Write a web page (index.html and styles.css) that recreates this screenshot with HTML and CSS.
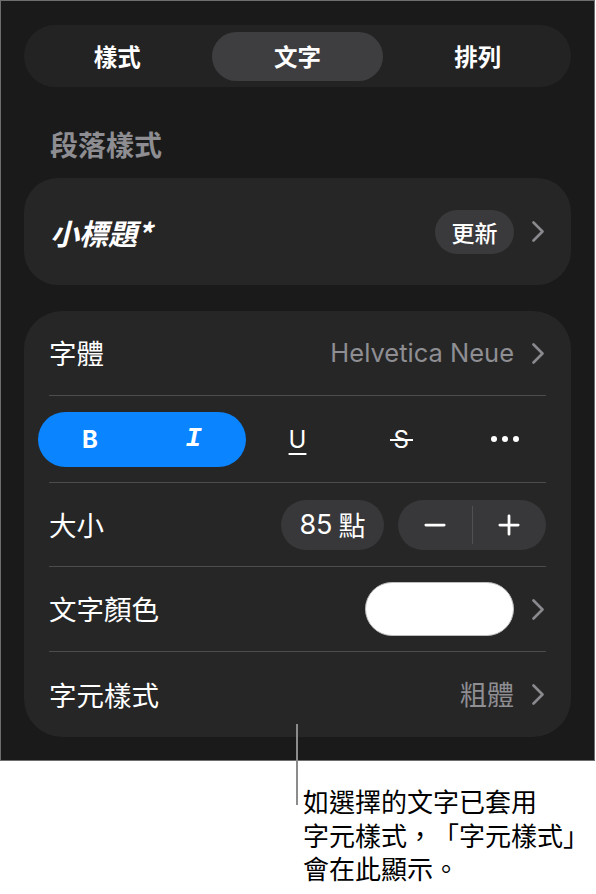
FILE: index.html
```html
<!DOCTYPE html>
<html lang="zh-Hant">
<head>
<meta charset="utf-8">
<link rel="stylesheet" href="styles.css">
</head>
<body>
<div class="page">
  <div class="screen">
    <div class="seg">
      <div class="seg-item">樣式</div>
      <div class="seg-item active">文字</div>
      <div class="seg-item">排列</div>
    </div>
    <div class="section-title">段落樣式</div>
    <div class="card card-style">
      <span class="style-name">小標題*</span>
      <span class="badge">更新</span>
      <svg class="chev" viewBox="0 0 14 23"><path d="M1.5 2.5 L10.5 11.5 L1.5 20.5"/></svg>
    </div>
    <div class="card card-main">
      <div class="row row-1">
        <span class="label">字體</span>
        <span class="value value-latin">Helvetica Neue</span>
        <svg class="chev" viewBox="0 0 14 23"><path d="M1.5 2.5 L10.5 11.5 L1.5 20.5"/></svg>
      </div>
      <div class="row row-format">
        <div class="bi-pill">
          <span class="fmt fmt-b">B</span>
          <span class="fmt fmt-i">I</span>
        </div>
        <span class="fmt fmt-u">U</span>
        <span class="fmt fmt-s">S</span>
        <span class="fmt dots"><i></i><i></i><i></i></span>
      </div>
      <div class="row">
        <span class="label">大小</span>
        <span class="pt-pill"><span class="num">85</span>&nbsp;點</span>
        <div class="stepper">
          <span class="step-btn">
            <svg viewBox="0 0 24 24" class="step-icon"><path d="M2 12 H22"/></svg>
          </span>
          <span class="step-div"></span>
          <span class="step-btn">
            <svg viewBox="0 0 24 24" class="step-icon"><path d="M2 12 H22 M12 2 V22"/></svg>
          </span>
        </div>
      </div>
      <div class="row">
        <span class="label">文字顏色</span>
        <span class="swatch"></span>
        <svg class="chev" viewBox="0 0 14 23"><path d="M1.5 2.5 L10.5 11.5 L1.5 20.5"/></svg>
      </div>
      <div class="row row-last">
        <span class="label">字元樣式</span>
        <span class="value">粗體</span>
        <svg class="chev" viewBox="0 0 14 23"><path d="M1.5 2.5 L10.5 11.5 L1.5 20.5"/></svg>
      </div>
    </div>
  </div>
  <div class="leader"></div>
  <p class="note">如選擇的文字已套用<br>字元樣式，「字元樣式」<br>會在此顯示。</p>
</div>
</body>
</html>
```

FILE: styles.css
```css
html, body {
  margin: 0;
  padding: 0;
  background: #ffffff;
}

body {
  font-family: Inter, "Noto Sans CJK TC", sans-serif;
}

.page {
  position: relative;
  width: 596px;
  height: 894px;
  overflow: hidden;
}

.screen {
  box-sizing: border-box;
  width: 595px;
  height: 761px;
  border: 1px solid #6e6e6e;
  background: #1a1a1a;
  padding: 24px 23px 0 23px;
  display: flex;
  flex-direction: column;
}

/* segmented control */
.seg {
  box-sizing: border-box;
  height: 62px;
  border-radius: 31px;
  background: #232323;
  padding: 7px 8px 6px 8px;
  display: grid;
  grid-template-columns: repeat(3, 1fr);
  column-gap: 10px;
}

.seg-item {
  display: flex;
  align-items: center;
  justify-content: center;
  border-radius: 25px;
  color: #ffffff;
  font-family: "Noto Sans CJK TC", sans-serif;
  font-size: 23.5px;
  font-weight: 600;
  padding-bottom: 2px;
}

.seg-item.active {
  background: #3e3e40;
}

.section-title {
  margin: 40px 0 0 26px;
  font-family: "Noto Sans CJK TC", sans-serif;
  font-size: 28px;
  line-height: 34px;
  font-weight: 600;
  color: #8d8d92;
}

.card {
  background: #262626;
}

.card-style {
  box-sizing: border-box;
  margin-top: 17px;
  height: 107px;
  border-radius: 34px;
  display: flex;
  align-items: center;
  padding: 0 25px 0 26px;
}

.style-name {
  font-family: "Noto Sans CJK TC", sans-serif;
  font-size: 29px;
  font-style: italic;
  font-weight: 600;
  color: #ffffff;
}

.badge {
  margin-left: auto;
  width: 79px;
  height: 44px;
  border-radius: 22px;
  background: #3a3a3c;
  display: flex;
  align-items: center;
  justify-content: center;
  color: #ffffff;
  font-family: "Noto Sans CJK TC", sans-serif;
  font-size: 23px;
  font-weight: 500;
}

.chev {
  width: 14px;
  height: 23px;
  margin-left: 18px;
  flex: none;
}

.chev path {
  fill: none;
  stroke: #8a8a8e;
  stroke-width: 2.6;
  stroke-linecap: round;
  stroke-linejoin: round;
}

.card-main {
  margin-top: 26px;
  border-radius: 38px;
  padding: 0 25px;
}

.row {
  box-sizing: border-box;
  height: 85px;
  display: flex;
  align-items: center;
  border-bottom: 1px solid #4c4c4e;
}

.row-format {
  height: 86px;
  display: grid;
  grid-template-columns: repeat(5, 1fr);
  align-items: center;
  margin: 0 -11px;
  padding: 0;
  border-bottom: none;
}

.row-format + .row {
  border-top: 1px solid #4c4c4e;
}

.row-last {
  border-bottom: none;
}

.label {
  color: #ffffff;
  font-family: "Noto Sans CJK TC", sans-serif;
  font-size: 27.5px;
  margin-top: -2px;
}

.value {
  margin-left: auto;
  color: #8e8e93;
  font-family: "Noto Sans CJK TC", sans-serif;
  font-size: 27px;
  margin-top: -2px;
}

.value-latin {
  font-family: Inter, sans-serif;
  font-size: 25.5px;
}

/* format buttons */
.bi-pill {
  grid-column: 1 / span 2;
  height: 55px;
  border-radius: 28px;
  background: #0a84ff;
  display: grid;
  grid-template-columns: 1fr 1fr;
  align-items: center;
}

.fmt {
  justify-self: center;
  color: #ffffff;
  text-align: center;
}

.fmt-b {
  font-family: Inter, sans-serif;
  font-weight: 700;
  font-size: 24px;
}

.fmt-i {
  font-family: "Liberation Mono", monospace;
  font-style: italic;
  font-weight: 700;
  font-size: 27px;
}

.fmt-u {
  font-family: Inter, sans-serif;
  font-size: 24px;
  text-decoration: underline;
  text-decoration-thickness: 2px;
  text-underline-offset: 5px;
}

.fmt-s {
  position: relative;
  font-family: Inter, sans-serif;
  font-size: 24px;
}

.fmt-s::after {
  content: "";
  position: absolute;
  left: -4px;
  right: -4px;
  top: 50%;
  height: 2px;
  background: #ffffff;
}

.dots {
  display: flex;
  gap: 5px;
}

.dots i {
  width: 6px;
  height: 6px;
  border-radius: 50%;
  background: #ffffff;
}

/* size row */
.pt-pill {
  margin-left: auto;
  width: 103px;
  height: 50px;
  border-radius: 25px;
  background: #38383a;
  display: flex;
  align-items: center;
  justify-content: center;
  color: #ffffff;
  font-family: "Noto Sans CJK TC", sans-serif;
  font-size: 27px;
}

.num {
  font-family: Inter, sans-serif;
}

.stepper {
  margin-left: 14px;
  width: 148px;
  height: 50px;
  border-radius: 25px;
  background: #38383a;
  display: flex;
  align-items: center;
}

.step-btn {
  flex: 1;
  display: flex;
  align-items: center;
  justify-content: center;
}

.step-div {
  width: 1px;
  height: 38px;
  background: #505052;
}

.step-icon {
  width: 22px;
  height: 22px;
}

.step-icon path {
  fill: none;
  stroke: #ffffff;
  stroke-width: 3;
  stroke-linecap: round;
}

.swatch {
  margin-left: auto;
  box-sizing: border-box;
  width: 149px;
  height: 54px;
  border-radius: 27px;
  background: #ffffff;
  border: 1px solid #bdbdbd;
}

/* callout */
.leader {
  position: absolute;
  left: 296px;
  top: 724px;
  width: 2px;
  height: 81px;
  background: #8c8c8c;
}

.note {
  margin: 23px 0 0 303px;
  color: #000000;
  font-family: "Noto Sans CJK TC", sans-serif;
  font-size: 26px;
  line-height: 33.5px;
  text-spacing-trim: space-all;
}
```
